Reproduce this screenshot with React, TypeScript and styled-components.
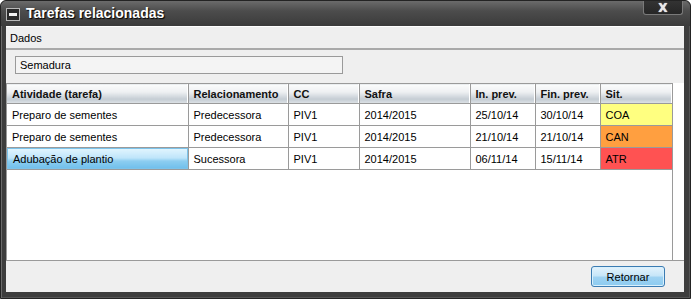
import React from "react";
import styled, { createGlobalStyle } from "styled-components";

const GlobalStyle = createGlobalStyle`
  html, body {
    margin: 0;
    padding: 0;
    background: #ffffff;
  }
  body {
    font-family: "Liberation Sans", Arial, sans-serif;
  }
`;

// ---------- window chrome ----------
const Window = styled.div`
  width: 691px;
  height: 299px;
  box-sizing: border-box;
  display: flex;
  flex-direction: column;
  background: #3d3d3d;
  border: 1px solid #232323;
  border-radius: 6px 6px 0 0;
  padding: 0 6px 6px 5px;
  box-shadow: inset 1px 1px 0 #6a6a6a, inset -1px -1px 0 #555;
`;

const TitleBar = styled.div`
  height: 25px;
  display: flex;
  align-items: flex-start;
  margin: 0 -6px 0 -5px;
  padding: 0 6px 0 5px;
  background: linear-gradient(#6b6b6b 0%, #4c4c4c 40%, #3b3b3b 100%);
  border-radius: 6px 6px 0 0;
`;

const MenuBox = styled.div`
  width: 12px;
  height: 11px;
  margin-top: 7px;
  border: 1px solid #b9b9b9;
  background: #2a2a2a;
  display: flex;
  align-items: center;
  justify-content: center;

  &::after {
    content: "";
    width: 8px;
    height: 3px;
    background: #f2f2f2;
  }
`;

const Title = styled.div`
  margin: 3px 0 0 6px;
  color: #ffffff;
  font-size: 14px;
  font-weight: bold;
  line-height: 18px;
  text-shadow: 1px 1px 1px #000;
`;

const CloseButton = styled.div`
  margin-left: auto;
  margin-right: 1px;
  width: 40px;
  height: 14px;
  box-sizing: border-box;
  border: 1px solid #7a7a7a;
  border-top: none;
  border-radius: 0 0 3px 3px;
  background: linear-gradient(#333 0%, #262626 100%);
  display: flex;
  align-items: center;
  justify-content: center;
  color: #e8e8e8;
  font-family: "DejaVu Sans", sans-serif;
  font-weight: bold;
  font-size: 12px;
  line-height: 12px;
  text-shadow: 0 0 1px #fff;
`;

// ---------- body ----------
const Body = styled.div`
  flex: 1;
  display: flex;
  flex-direction: column;
  background: #efefef;
  border-top: 1px solid #ffffff;
  min-height: 0;
`;

const SectionLabel = styled.div`
  height: 21px;
  padding-left: 4px;
  display: flex;
  align-items: center;
  font-size: 11px;
  color: #000;
  border-bottom: 2px solid #a9a9a9;
`;

const FieldRow = styled.div`
  padding: 6px 0 0 9px;
`;

const TextField = styled.div`
  width: 328px;
  height: 18px;
  box-sizing: border-box;
  border: 1px solid #9a9a9a;
  background: #f4f4f4;
  font-size: 11px;
  line-height: 16px;
  padding-left: 4px;
`;

const TablePane = styled.div`
  margin-top: 9px;
  height: 177px;
  display: flex;
  background: #ffffff;
  border-left: 1px solid #9a9a9a;
  border-bottom: 1px solid #9a9a9a;
`;

const TableScroll = styled.div`
  width: 665px;
  border-right: 1px solid #9a9a9a;
`;

const Grid = styled.table`
  border-collapse: collapse;
  table-layout: fixed;
  width: 665px;
  font-size: 11px;
`;

const HeadCell = styled.th<{ $w: number }>`
  width: ${(p) => p.$w}px;
  height: 20px;
  padding: 0 0 0 5px;
  box-sizing: border-box;
  text-align: left;
  font-weight: bold;
  color: #111;
  border-top: 1px solid #9a9a9a;
  border-bottom: 1px solid #9a9a9a;
  border-right: 1px solid #9a9a9a;
  box-shadow: inset -1px 0 0 #ffffff;
  background: linear-gradient(
    #fbfcfc 0%,
    #eef0f2 40%,
    #dde2e6 55%,
    #c4ccd3 78%,
    #dfe3e7 100%
  );
  white-space: nowrap;
`;

const Cell = styled.td<{ $bg?: string }>`
  height: 21px;
  padding: 0 0 0 5px;
  border-right: 1px solid #9a9a9a;
  border-bottom: 1px solid #9a9a9a;
  background: ${(p) => p.$bg || "#ffffff"};
  color: #000;
  white-space: nowrap;
`;

const SelectedCell = styled.td`
  height: 21px;
  padding: 0 0 0 6px;
  border-right: 1px solid #9a9a9a;
  border-bottom: 1px solid #9a9a9a;
  background: linear-gradient(#e2f5fe 0%, #bfe5fa 45%, #8ccdf0 60%, #6cbdeb 100%);
  box-shadow: inset 0 0 0 1px #7cc3ea;
  color: #000;
  white-space: nowrap;
`;

const Footer = styled.div`
  flex: 1;
  display: flex;
  justify-content: flex-end;
  align-items: flex-start;
  padding: 5px 19px 0 0;
`;

const ActionButton = styled.button`
  width: 74px;
  height: 21px;
  border: 1px solid #3b7cb3;
  border-radius: 3px;
  background: linear-gradient(#e3f3fc 0%, #c7e6f8 45%, #9ed2f2 55%, #8ccbf0 100%);
  font-family: "Liberation Sans", Arial, sans-serif;
  font-size: 11px;
  color: #000;
  padding: 0;
  box-shadow: inset 0 0 0 1px #d9f0fc;
`;

// ---------- data ----------
type Row = {
  atividade: string;
  rel: string;
  cc: string;
  safra: string;
  ini: string;
  fim: string;
  sit: string;
  color: string;
  selected?: boolean;
};

const columns = [
  { label: "Atividade (tarefa)", w: 181 },
  { label: "Relacionamento", w: 100 },
  { label: "CC", w: 71 },
  { label: "Safra", w: 111 },
  { label: "In. prev.", w: 65 },
  { label: "Fin. prev.", w: 65 },
  { label: "Sit.", w: 72 },
];

const rows: Row[] = [
  { atividade: "Preparo de sementes", rel: "Predecessora", cc: "PIV1", safra: "2014/2015", ini: "25/10/14", fim: "30/10/14", sit: "COA", color: "#ffff80" },
  { atividade: "Preparo de sementes", rel: "Predecessora", cc: "PIV1", safra: "2014/2015", ini: "21/10/14", fim: "21/10/14", sit: "CAN", color: "#ff9f40" },
  { atividade: "Adubação de plantio", rel: "Sucessora", cc: "PIV1", safra: "2014/2015", ini: "06/11/14", fim: "15/11/14", sit: "ATR", color: "#ff5252", selected: true },
];

export default function App() {
  return (
    <>
      <GlobalStyle />
      <Window>
        <TitleBar>
          <MenuBox />
          <Title>Tarefas relacionadas</Title>
          <CloseButton>X</CloseButton>
        </TitleBar>
        <Body>
          <SectionLabel>Dados</SectionLabel>
          <FieldRow>
            <TextField>Semadura</TextField>
          </FieldRow>
          <TablePane>
            <TableScroll>
              <Grid>
                <thead>
                  <tr>
                    {columns.map((c) => (
                      <HeadCell key={c.label} $w={c.w}>
                        {c.label}
                      </HeadCell>
                    ))}
                  </tr>
                </thead>
                <tbody>
                  {rows.map((r, i) => (
                    <tr key={i}>
                      {r.selected ? <SelectedCell>{r.atividade}</SelectedCell> : <Cell>{r.atividade}</Cell>}
                      <Cell>{r.rel}</Cell>
                      <Cell>{r.cc}</Cell>
                      <Cell>{r.safra}</Cell>
                      <Cell>{r.ini}</Cell>
                      <Cell>{r.fim}</Cell>
                      <Cell $bg={r.color}>{r.sit}</Cell>
                    </tr>
                  ))}
                </tbody>
              </Grid>
            </TableScroll>
          </TablePane>
          <Footer>
            <ActionButton>Retornar</ActionButton>
          </Footer>
        </Body>
      </Window>
    </>
  );
}
